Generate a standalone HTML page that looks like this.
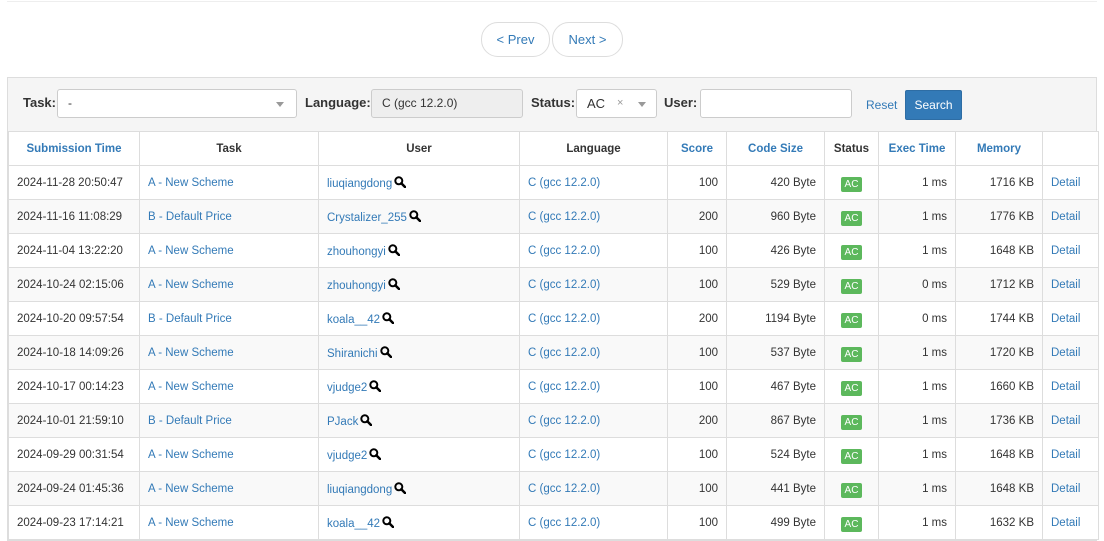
<!DOCTYPE html>
<html><head><meta charset="utf-8"><style>
*{box-sizing:border-box}
body{margin:0;width:1104px;height:538px;overflow:hidden;background:#fff;font-family:"Liberation Sans",Arial,sans-serif;font-size:11.5px;color:#333}
a{color:#337ab7;text-decoration:none}
.top{position:absolute;left:7px;right:7px;top:1px;border-top:1px solid #eee}
.btn{position:absolute;top:22px;height:35px;border:1px solid #ddd;border-radius:17px;color:#337ab7;font-size:13px;line-height:33px;text-align:center}
.panel{position:absolute;left:7px;top:77px;width:1090px;border:1px solid #ddd;background:#f5f5f5}
.filter{height:53px;position:relative;font-weight:bold;font-size:13px}
.filter span,.filter div{position:absolute}
.inp{background:#fff;border:1px solid #ccc;border-radius:3px;height:29px;top:11px;font-weight:normal;font-size:12px;line-height:27px;padding-left:10px}
table{border-collapse:collapse;table-layout:fixed;width:1090px;background:#fff}
td,th{border:1px solid #ddd;height:34px;padding:0 8px;white-space:nowrap;overflow:hidden}
th{font-size:11.5px;text-align:center}
th.l{color:#337ab7}
tr:nth-child(even) td{background:#f9f9f9}
td.r{text-align:right}td.c{text-align:center}
.ac{display:inline-block;background:#5cb85c;color:#fff;font-size:10px;padding:2px 4px;border-radius:2px;line-height:11px;margin-top:4px}
.q{display:inline-block;width:12px;height:12px;vertical-align:-1px;margin-left:2px}
</style></head><body>
<div class="top"></div>
<div class="btn" style="left:481px;width:69px">&lt; Prev</div>
<div class="btn" style="left:552px;width:71px">Next &gt;</div>
<div class="panel">
<div class="filter">
<span style="left:15px;top:17px">Task:</span>
<div class="inp" style="left:49px;width:240px">-<span style="right:12px;top:12px;border:4px solid transparent;border-top:5px solid #999;border-bottom:0"></span></div>
<span style="left:297px;top:17px">Language:</span>
<div class="inp" style="left:363px;width:152px;background:#eee">C (gcc 12.2.0)</div>
<span style="left:523px;top:17px">Status:</span>
<div class="inp" style="left:568px;width:81px;font-size:13px">AC<span style="left:40px;top:0;color:#999;font-size:11px">×</span><span style="right:10px;top:12px;border:4px solid transparent;border-top:5px solid #999;border-bottom:0"></span></div>
<span style="left:656px;top:17px">User:</span>
<div class="inp" style="left:692px;width:152px"></div>
<span style="left:858px;top:20px;color:#337ab7;font-weight:normal;font-size:12px">Reset</span>
<div style="left:897px;top:12px;width:57px;height:30px;background:#337ab7;border:1px solid #2e6da4;border-radius:2px;color:#fff;font-weight:normal;font-size:12px;line-height:28px;text-align:center">Search</div>
</div>
<table>
<colgroup><col style="width:131px"><col style="width:179px"><col style="width:201px"><col style="width:148px"><col style="width:59px"><col style="width:98px"><col style="width:54px"><col style="width:77px"><col style="width:87px"><col style="width:56px"></colgroup>
<tr><th class="l">Submission Time</th><th>Task</th><th>User</th><th>Language</th><th class="l">Score</th><th class="l">Code Size</th><th>Status</th><th class="l">Exec Time</th><th class="l">Memory</th><th></th></tr>
</table>
</div>
<script>
var d=[["2024-11-28 20:50:47","A - New Scheme","liuqiangdong",100,420,1,1716],
["2024-11-16 11:08:29","B - Default Price","Crystalizer_255",200,960,1,1776],
["2024-11-04 13:22:20","A - New Scheme","zhouhongyi",100,426,1,1648],
["2024-10-24 02:15:06","A - New Scheme","zhouhongyi",100,529,0,1712],
["2024-10-20 09:57:54","B - Default Price","koala__42",200,1194,0,1744],
["2024-10-18 14:09:26","A - New Scheme","Shiranichi",100,537,1,1720],
["2024-10-17 00:14:23","A - New Scheme","vjudge2",100,467,1,1660],
["2024-10-01 21:59:10","B - Default Price","PJack",200,867,1,1736],
["2024-09-29 00:31:54","A - New Scheme","vjudge2",100,524,1,1648],
["2024-09-24 01:45:36","A - New Scheme","liuqiangdong",100,441,1,1648],
["2024-09-23 17:14:21","A - New Scheme","koala__42",100,499,1,1632]];
var q='<svg class="q" viewBox="0 0 12 12"><circle cx="4.8" cy="4.8" r="3.5" fill="none" stroke="#000" stroke-width="2"/><path d="M7.3 7.3L11 11" stroke="#000" stroke-width="2.5" stroke-linecap="round"/></svg>';
var t=document.querySelector('table'),h='';
d.forEach(function(r){h+='<tr><td>'+r[0]+'</td><td><a>'+r[1]+'</a></td><td><a>'+r[2]+'</a>'+q+'</td><td><a>C (gcc 12.2.0)</a></td><td class="r">'+r[3]+'</td><td class="r">'+r[4]+' Byte</td><td class="c"><span class="ac">AC</span></td><td class="r">'+r[5]+' ms</td><td class="r">'+r[6]+' KB</td><td><a>Detail</a></td></tr>'});
t.insertAdjacentHTML('beforeend',h);
</script>
</body></html>
